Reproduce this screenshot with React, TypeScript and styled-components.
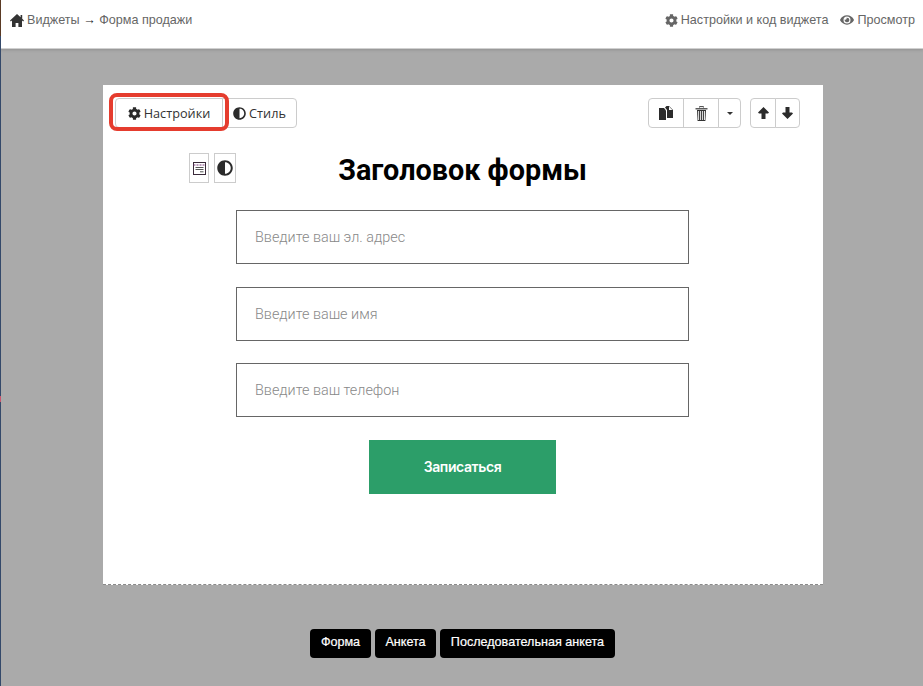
import React from 'react';
import styled, { createGlobalStyle } from 'styled-components';
import { FaCog, FaEye, FaAdjust } from 'react-icons/fa';

const GlobalStyle = createGlobalStyle`
  html, body {
    margin: 0;
    padding: 0;
    height: 100%;
    overflow: hidden;
  }
  #root {
    height: 100%;
  }
  * {
    box-sizing: border-box;
  }
`;

const HomeIcon = () => (
  <svg width="14" height="13" viewBox="0 0 14 13">
    <path
      d="M7 0 L10.6 3.3 V1 H12.2 V4.8 L14 6.5 L13.2 7.4 L12 6.4 V13 H8.4 V9 H5.6 V13 H2 V6.4 L0.8 7.4 L0 6.5 Z"
      fill="#333"
    />
  </svg>
);

const CopyIcon = () => (
  <svg width="14" height="14" viewBox="0 0 14 14">
    <path d="M0 2 H5 L7 4.5 V14 H0 Z" fill="#2b2b2b" />
    <path d="M7.5 0 H10 L14 4 V12 H8 V4 L6 1.5 Z" fill="#2b2b2b" />
    <path d="M10 0.6 L13.4 4 H10 Z" fill="#fff" />
  </svg>
);

const TrashIcon = () => (
  <svg width="13" height="15" viewBox="0 0 13 15">
    <path d="M4.5 1.5 V0.6 H8.5 V1.5" fill="none" stroke="#444" />
    <path d="M0.5 2.2 H12.5 V3.4 H0.5 Z" fill="#333" />
    <path d="M2 4 H11 L10.4 15 H2.6 Z" fill="#333" />
    <path d="M3.6 5 V14 M5.6 5 V14 M7.6 5 V14 M9.5 5 V14" stroke="#fff" strokeWidth="0.9" />
  </svg>
);

const ArrowUpIcon = () => (
  <svg width="11" height="12" viewBox="0 0 11 12">
    <path d="M5.5 0 L11 5.6 L10 6.6 H7.5 V12 H3.5 V6.6 H1 L0 5.6 Z" fill="#2b2b2b" />
  </svg>
);

const ArrowDownIcon = () => (
  <svg width="11" height="12" viewBox="0 0 11 12">
    <path d="M5.5 12 L11 6.4 L10 5.4 H7.5 V0 H3.5 V5.4 H1 L0 6.4 Z" fill="#2b2b2b" />
  </svg>
);

const FormIcon = () => (
  <svg width="13" height="13" viewBox="0 0 13 13">
    <rect x="0.5" y="0.5" width="12" height="12" fill="#fff" stroke="#3a2a3a" />
    <path d="M0.5 3 H12.5" stroke="#7a3b7a" strokeDasharray="2 1" />
    <path d="M2.5 5.5 H10.5 M2.5 7.5 H10.5 M7 9.8 H10.5" stroke="#555" />
  </svg>
);

const App: React.FC = () => {
  return (
    <Page>
      <GlobalStyle />
      <EdgeStrip />
      <Header>
        <Breadcrumb>
          <HomeIcon />
          <span>
            Виджеты <PathArrow>→</PathArrow> Форма продажи
          </span>
        </Breadcrumb>
        <HeaderLinks>
          <HeaderLink>
            <FaCog size={13} />
            Настройки и код виджета
          </HeaderLink>
          <HeaderLink>
            <FaEye size={14} />
            Просмотр
          </HeaderLink>
        </HeaderLinks>
      </Header>

      <Workspace>
        <Canvas>
          <Toolbar>
            <ButtonGroup>
              <ToolButton $width={108} $highlighted>
                <FaCog size={13} color="#2b2b2b" />
                Настройки
              </ToolButton>
              <ToolButton $width={75}>
                <FaAdjust size={13} color="#2b2b2b" />
                Стиль
              </ToolButton>
            </ButtonGroup>
            <RightTools>
              <ButtonGroup>
                <ToolButton $width={36}>
                  <CopyIcon />
                </ToolButton>
                <ToolButton $width={36}>
                  <TrashIcon />
                </ToolButton>
                <ToolButton $width={23}>
                  <Caret />
                </ToolButton>
              </ButtonGroup>
              <ButtonGroup>
                <ToolButton $width={26}>
                  <ArrowUpIcon />
                </ToolButton>
                <ToolButton $width={25}>
                  <ArrowDownIcon />
                </ToolButton>
              </ButtonGroup>
            </RightTools>
          </Toolbar>

          <FormBody>
            <TitleRow>
              <MiniTools>
                <MiniButton $width={20}>
                  <FormIcon />
                </MiniButton>
                <MiniButton $width={22}>
                  <FaAdjust size={16} color="#2b2b2b" />
                </MiniButton>
              </MiniTools>
              <Title>Заголовок формы</Title>
            </TitleRow>
            <Field placeholder="Введите ваш эл. адрес" readOnly />
            <Field placeholder="Введите ваше имя" readOnly />
            <Field placeholder="Введите ваш телефон" readOnly />
            <SubmitButton>Записаться</SubmitButton>
          </FormBody>
        </Canvas>

        <Tabs>
          <Tab $width={61}>Форма</Tab>
          <Tab $width={61}>Анкета</Tab>
          <Tab $width={175}>Последовательная анкета</Tab>
        </Tabs>
      </Workspace>
    </Page>
  );
};

const Page = styled.div`
  position: relative;
  width: 923px;
  height: 686px;
  display: flex;
  flex-direction: column;
  background: #aaa;
  overflow: hidden;
`;

const EdgeStrip = styled.div`
  position: absolute;
  left: 0;
  top: 0;
  bottom: 0;
  z-index: 2;
  width: 1px;
  background: linear-gradient(
    #5a3a24 0,
    #5a3a24 36px,
    #34496a 36px,
    #34496a 396px,
    #c8566e 396px,
    #c8566e 402px,
    #34496a 402px
  );
`;

const Header = styled.header`
  height: 49px;
  flex-shrink: 0;
  padding: 0 8px 8px 10px;
  display: flex;
  align-items: center;
  justify-content: space-between;
  background: #fff;
  border-bottom: 1px solid #d0d0d0;
  box-shadow: 0 1px 3px rgba(0, 0, 0, 0.15);
  font-family: 'Liberation Sans', sans-serif;
  font-size: 12.6px;
  color: #666;
`;

const Breadcrumb = styled.div`
  display: flex;
  align-items: center;
  gap: 3px;
`;

const PathArrow = styled.span`
  color: #222;
`;

const HeaderLinks = styled.div`
  display: flex;
  align-items: center;
  gap: 12px;
`;

const HeaderLink = styled.div`
  display: flex;
  align-items: center;
  gap: 3px;
`;

const Workspace = styled.main`
  flex: 1;
  display: flex;
  flex-direction: column;
  align-items: center;
  padding: 36px 0 0 4px;
  margin-right: 1px;
`;

const Canvas = styled.section`
  width: 720px;
  height: 500px;
  background: #fff;
  border-bottom: 1px dashed #8a8a8a;
  display: flex;
  flex-direction: column;
`;

const Toolbar = styled.div`
  display: flex;
  justify-content: space-between;
  padding: 13px 23px 0 12px;
`;

const RightTools = styled.div`
  display: flex;
  gap: 9px;
`;

const ButtonGroup = styled.div`
  display: flex;
`;

const ToolButton = styled.button<{ $width: number; $highlighted?: boolean }>`
  position: relative;
  z-index: ${props => (props.$highlighted ? 1 : 0)};
  width: ${props => props.$width}px;
  height: 30px;
  padding: 0;
  display: flex;
  align-items: center;
  justify-content: center;
  gap: 3px;
  background: #fff;
  border: 1px solid #ccc;
  margin-left: -1px;
  font-family: 'Open Sans', 'Liberation Sans', sans-serif;
  font-size: 12.7px;
  color: #333;

  &:first-child {
    margin-left: 0;
    border-radius: 4px 0 0 4px;
  }

  &:last-child {
    border-radius: 0 4px 4px 0;
  }

  ${props =>
    props.$highlighted &&
    `
    &::after {
      content: '';
      position: absolute;
      left: -7px;
      right: -7px;
      top: -6px;
      bottom: -4px;
      border: 4px solid #e53c2e;
      border-radius: 8px;
    }
  `}
`;

const Caret = styled.span`
  width: 0;
  height: 0;
  border-left: 3px solid transparent;
  border-right: 3px solid transparent;
  border-top: 3px solid #333;
`;

const FormBody = styled.div`
  display: flex;
  flex-direction: column;
  align-items: center;
  padding-right: 1px;
`;

const TitleRow = styled.div`
  position: relative;
  width: 453px;
  height: 82px;
  display: flex;
  align-items: flex-start;
  justify-content: center;
`;

const MiniTools = styled.div`
  position: absolute;
  left: -47px;
  top: 25px;
  display: flex;
  gap: 5px;
`;

const MiniButton = styled.div<{ $width: number }>`
  width: ${props => props.$width}px;
  height: 30px;
  display: flex;
  align-items: center;
  justify-content: center;
  border: 1px solid #ccc;
  background: #fff;
`;

const Title = styled.h1`
  margin: 23px 0 0;
  font-family: 'Roboto', 'Liberation Sans', sans-serif;
  font-size: 28.8px;
  font-weight: 700;
  line-height: 38px;
  color: #000;
`;

const Field = styled.input`
  width: 453px;
  height: 54px;
  flex-shrink: 0;
  margin-bottom: 23px;
  padding: 0 18px;
  background: #fff;
  border: 1px solid #666;
  border-radius: 0;
  outline: none;
  font-family: 'Roboto', 'Liberation Sans', sans-serif;
  font-size: 14.4px;
  font-weight: 300;

  &:nth-of-type(2) {
    margin-bottom: 22px;
  }

  &::placeholder {
    color: #888;
  }
`;

const SubmitButton = styled.button`
  width: 187px;
  height: 54px;
  flex-shrink: 0;
  padding: 0 0 1px;
  border: none;
  background: #2c9e69;
  color: #fff;
  font-family: 'Inter', 'Liberation Sans', sans-serif;
  font-size: 14px;
  font-weight: 600;
  letter-spacing: -0.4px;
`;

const Tabs = styled.nav`
  display: flex;
  gap: 4px;
  margin: 44px 1px 0 0;
`;

const Tab = styled.div<{ $width: number }>`
  width: ${props => props.$width}px;
  height: 29px;
  padding-bottom: 3px;
  display: flex;
  align-items: center;
  justify-content: center;
  background: #000;
  border-radius: 4px;
  color: #fff;
  font-family: 'Liberation Sans', sans-serif;
  font-size: 12.6px;
  -webkit-text-stroke: 0.2px #fff;
`;

export default App;
